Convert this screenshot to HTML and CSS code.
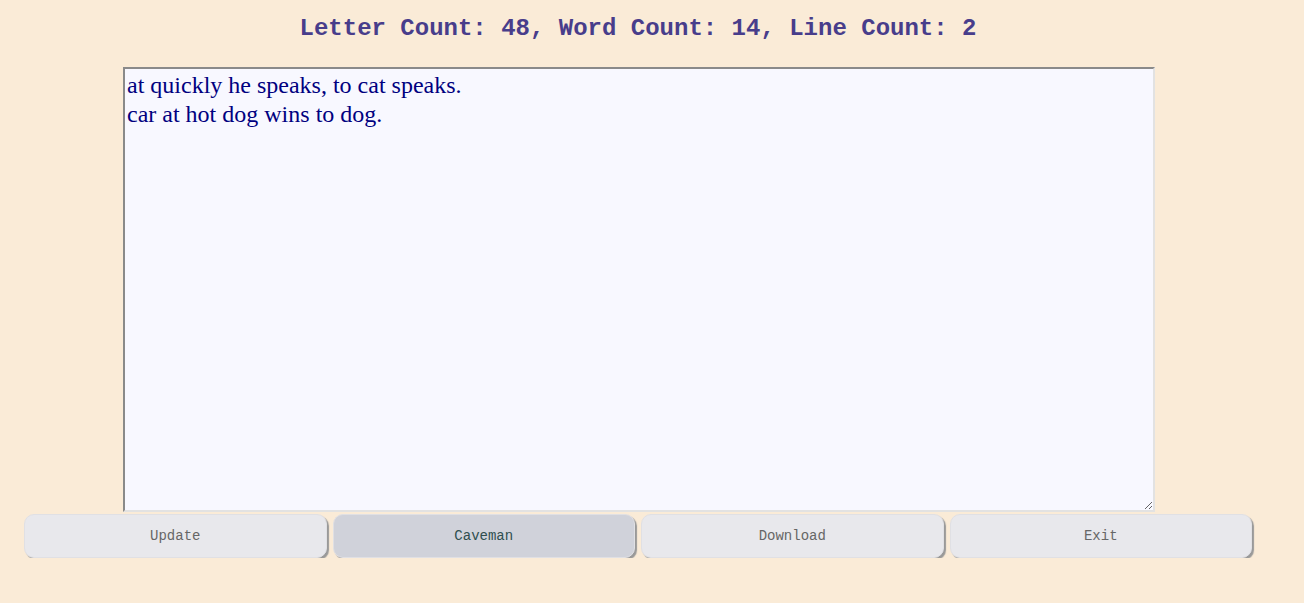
FILE: index.html
```html
<!DOCTYPE html>
<html>
<head>
<meta charset="utf-8">
<link rel="stylesheet" href="styles.css">
</head>
<body>
<div class="app">
  <h2 class="stats">Letter Count: 48, Word Count: 14, Line Count: 2</h2>
  <textarea class="editor">at quickly he speaks, to cat speaks.
car at hot dog wins to dog.</textarea>
  <div class="actions">
    <button class="btn">Update</button>
    <button class="btn active">Caveman</button>
    <button class="btn">Download</button>
    <button class="btn">Exit</button>
  </div>
</div>
</body>
</html>
```

FILE: styles.css
```css
html, body {
  margin: 0;
  padding: 0;
  background: #faebd7;
}
body {
  padding-right: 28px;
}
.app {
  width: 1228px;
  margin: 0 auto;
  display: flex;
  flex-direction: column;
  align-items: center;
}
.stats {
  margin: 15px 0 0 0;
  font-family: "Courier New", "Nimbus Mono PS", "FreeMono", Courier, "Liberation Mono", monospace;
  font-weight: bold;
  font-size: 24px;
  line-height: 28px;
  color: #483d8b;
  text-align: center;
}
.editor {
  box-sizing: border-box;
  width: 1032px;
  height: 445px;
  margin: 24px 0 0 2px;
  display: block;
  background: #f8f8ff;
  color: #000080;
  font-family: "Liberation Serif", "Times New Roman", serif;
  font-size: 24px;
  line-height: 29px;
  padding: 2px 2px;
  border-style: solid;
  border-width: 2px;
  border-top-color: #8a8a8a;
  border-left-color: #8a8a8a;
  border-right-color: #e2e2e2;
  border-bottom-color: #e2e2e2;
  resize: both;
  outline: none;
}
.actions {
  display: flex;
  gap: 6px;
  margin-top: 2px;
  width: 1228px;
}
.btn {
  flex: 1;
  height: 44px;
  border: 1px solid #e0e0e4;
  border-radius: 10px;
  background: #e8e8ec;
  box-shadow: 2px 2px 1px #999;
  font-family: "Courier New", "Nimbus Mono PS", "FreeMono", Courier, "Liberation Mono", monospace;
  font-size: 14px;
  color: #666;
}
.btn.active {
  background: #d0d2da;
  color: #2f4f4f;
}
```
